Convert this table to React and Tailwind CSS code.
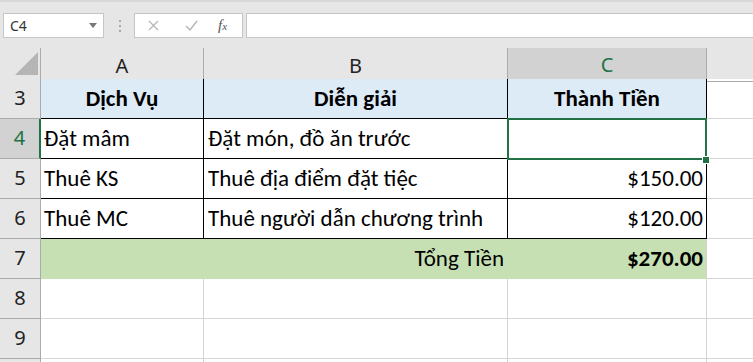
import React from "react";

const FONT = { fontFamily: '"Carlito", "Calibri", "Lato", "Noto Sans", sans-serif' };
const UI_FONT = { fontFamily: '"Noto Sans", "Open Sans", sans-serif' };

function Toolbar() {
  return (
    <div className="h-[48px] bg-[#e6e6e6] border-t-[2px] border-[#d8d8d8] flex items-start pt-[11px]" style={UI_FONT}>
      {/* name box */}
      <div className="ml-[3px] w-[101px] h-[25px] bg-white border border-[#c6c6c6] flex items-center justify-between pl-[6px] pr-[6px]">
        <span className="text-[14px] text-[#333] leading-none">C4</span>
        <svg width="8" height="5" viewBox="0 0 8 5"><path d="M0 0 H8 L4 5 Z" fill="#777" /></svg>
      </div>
      {/* grip dots */}
      <div className="ml-[15px] h-[25px] flex flex-col justify-center gap-[3px]">
        <span className="block w-[2px] h-[2px] bg-[#a8a8a8]" />
        <span className="block w-[2px] h-[2px] bg-[#a8a8a8]" />
        <span className="block w-[2px] h-[2px] bg-[#a8a8a8]" />
      </div>
      {/* cancel / enter / function buttons */}
      <div className="ml-[13px] w-[109px] h-[25px] bg-white border border-[#c6c6c6] flex items-center">
        <svg className="ml-[13px]" width="11" height="11" viewBox="0 0 11 11">
          <path d="M1 1 L10 10 M10 1 L1 10" stroke="#b8b8b8" strokeWidth="1.4" />
        </svg>
        <svg className="ml-[26px]" width="13" height="11" viewBox="0 0 13 11">
          <path d="M1 6 L5 10 L12 1" stroke="#b8b8b8" strokeWidth="1.5" fill="none" />
        </svg>
        <span className="ml-[20px] text-[15px] italic text-[#555] leading-none" style={{ fontFamily: '"Liberation Serif", serif' }}>
          f<span className="text-[11px]">x</span>
        </span>
      </div>
      {/* formula input */}
      <div className="ml-[3px] flex-1 h-[25px] bg-white border border-[#c6c6c6] border-r-0" />
    </div>
  );
}

const GRID = "grid grid-cols-[41px_163px_304px_199px_1fr]";

function ColHeaders() {
  return (
    <div className={GRID + " h-[31px] bg-[#e6e6e6]"} style={UI_FONT}>
      <div className="border-r border-b border-[#ababab] relative">
        <svg className="absolute left-[15px] top-[4px]" width="23" height="23" viewBox="0 0 23 23">
          <path d="M23 0 V23 H0 Z" fill="#b5b5b5" />
        </svg>
      </div>
      <div className="border-r border-b border-[#ababab] flex items-center justify-center text-[20px] text-[#222] pt-[2px]">A</div>
      <div className="border-r border-b border-[#ababab] flex items-center justify-center text-[20px] text-[#222] pt-[2px]">B</div>
      <div className="bg-[#d2d2d2] border-r border-[#ababab] border-b-[2px] border-b-[#217346] flex items-center justify-center text-[20px] text-[#217346] pt-[2px]">C</div>
      <div className="border-b border-[#ababab]" />
    </div>
  );
}

function RowHead({ n, active }) {
  return active ? (
    <div className="bg-[#d2d2d2] border-b border-[#ababab] border-r-[2px] border-r-[#217346] flex items-end justify-center pb-[5px] text-[20px] text-[#217346]" style={UI_FONT}>
      {n}
    </div>
  ) : (
    <div className="bg-[#e6e6e6] border-r border-b border-[#ababab] flex items-end justify-center pb-[5px] text-[20px] text-[#222]" style={UI_FONT}>
      {n}
    </div>
  );
}

function Sheet() {
  const body = "h-[40px] flex items-end pb-[8px] text-[23px] text-black leading-none whitespace-nowrap";
  return (
    <div className="relative" style={FONT}>
      {/* row 3: headings */}
      <div className={GRID}>
        <RowHead n={3} />
        <div className={body + " justify-center font-bold bg-[#ddebf7] border-r border-b border-black"}>Dịch Vụ</div>
        <div className={body + " justify-center font-bold bg-[#ddebf7] border-r border-b border-black"}>Diễn giải</div>
        <div className={body + " justify-center font-bold bg-[#ddebf7] border-r border-b border-black"}>Thành Tiền</div>
        <div className="border-b border-[#d4d4d4]" />
      </div>
      {/* row 4 */}
      <div className={GRID}>
        <RowHead n={4} active />
        <div className={body + " pl-[3px] border-r border-b border-black"}>Đặt mâm</div>
        <div className={body + " pl-[4px] border-r border-b border-black"}>Đặt món, đồ ăn trước</div>
        <div className={body + " border-r border-b border-black"} />
        <div className="border-b border-[#d4d4d4]" />
      </div>
      {/* row 5 */}
      <div className={GRID}>
        <RowHead n={5} />
        <div className={body + " pl-[3px] border-r border-b border-black"}>Thuê KS</div>
        <div className={body + " pl-[4px] border-r border-b border-black"}>Thuê địa điểm đặt tiệc</div>
        <div className={body + " justify-end pr-[3px] border-r border-b border-black"}>$150.00</div>
        <div className="border-b border-[#d4d4d4]" />
      </div>
      {/* row 6 */}
      <div className={GRID}>
        <RowHead n={6} />
        <div className={body + " pl-[3px] border-r border-b border-black"}>Thuê MC</div>
        <div className={body + " pl-[4px] border-r border-b border-black"}>Thuê người dẫn chương trình</div>
        <div className={body + " justify-end pr-[3px] border-r border-b border-black"}>$120.00</div>
        <div className="border-b border-[#d4d4d4]" />
      </div>
      {/* row 7: total */}
      <div className={GRID}>
        <RowHead n={7} />
        <div className={body + " bg-[#c6e0b4] border-r border-b border-[#c6e0b4]"} />
        <div className={body + " justify-end pr-[3px] bg-[#c6e0b4] border-r border-b border-[#c6e0b4]"}>Tổng Tiền</div>
        <div className={body + " justify-end pr-[3px] font-bold bg-[#c6e0b4] border-r border-[#d4d4d4] border-b border-b-[#c6e0b4]"}>$270.00</div>
        <div className="border-b border-[#d4d4d4]" />
      </div>
      {/* empty rows */}
      {[8, 9].map((n) => (
        <div key={n} className={GRID}>
          <RowHead n={n} />
          <div className="h-[40px] border-r border-b border-[#d4d4d4]" />
          <div className="h-[40px] border-r border-b border-[#d4d4d4]" />
          <div className="h-[40px] border-r border-b border-[#d4d4d4]" />
          <div className="h-[40px] border-b border-[#d4d4d4]" />
        </div>
      ))}
      {/* next row, only its top edge is in view */}
      <div className={GRID}>
        <div className="h-[40px] bg-[#e6e6e6] border-r border-[#ababab]" />
        <div className="h-[40px] border-r border-[#d4d4d4]" />
        <div className="h-[40px] border-r border-[#d4d4d4]" />
        <div className="h-[40px] border-r border-[#d4d4d4]" />
        <div className="h-[40px]" />
      </div>
      {/* active cell selection around C4 with fill handle */}
      <div className="absolute left-[507px] top-[39px] w-[200px] h-[42px] border-[2px] border-[#217346] pointer-events-none" />
      <div className="absolute left-[703px] top-[78px] w-[6px] h-[6px] bg-[#217346] outline outline-1 outline-white" />
    </div>
  );
}

export default function App() {
  return (
    <div className="w-[753px] h-[362px] overflow-hidden bg-white">
      <Toolbar />
      <ColHeaders />
      <Sheet />
    </div>
  );
}
